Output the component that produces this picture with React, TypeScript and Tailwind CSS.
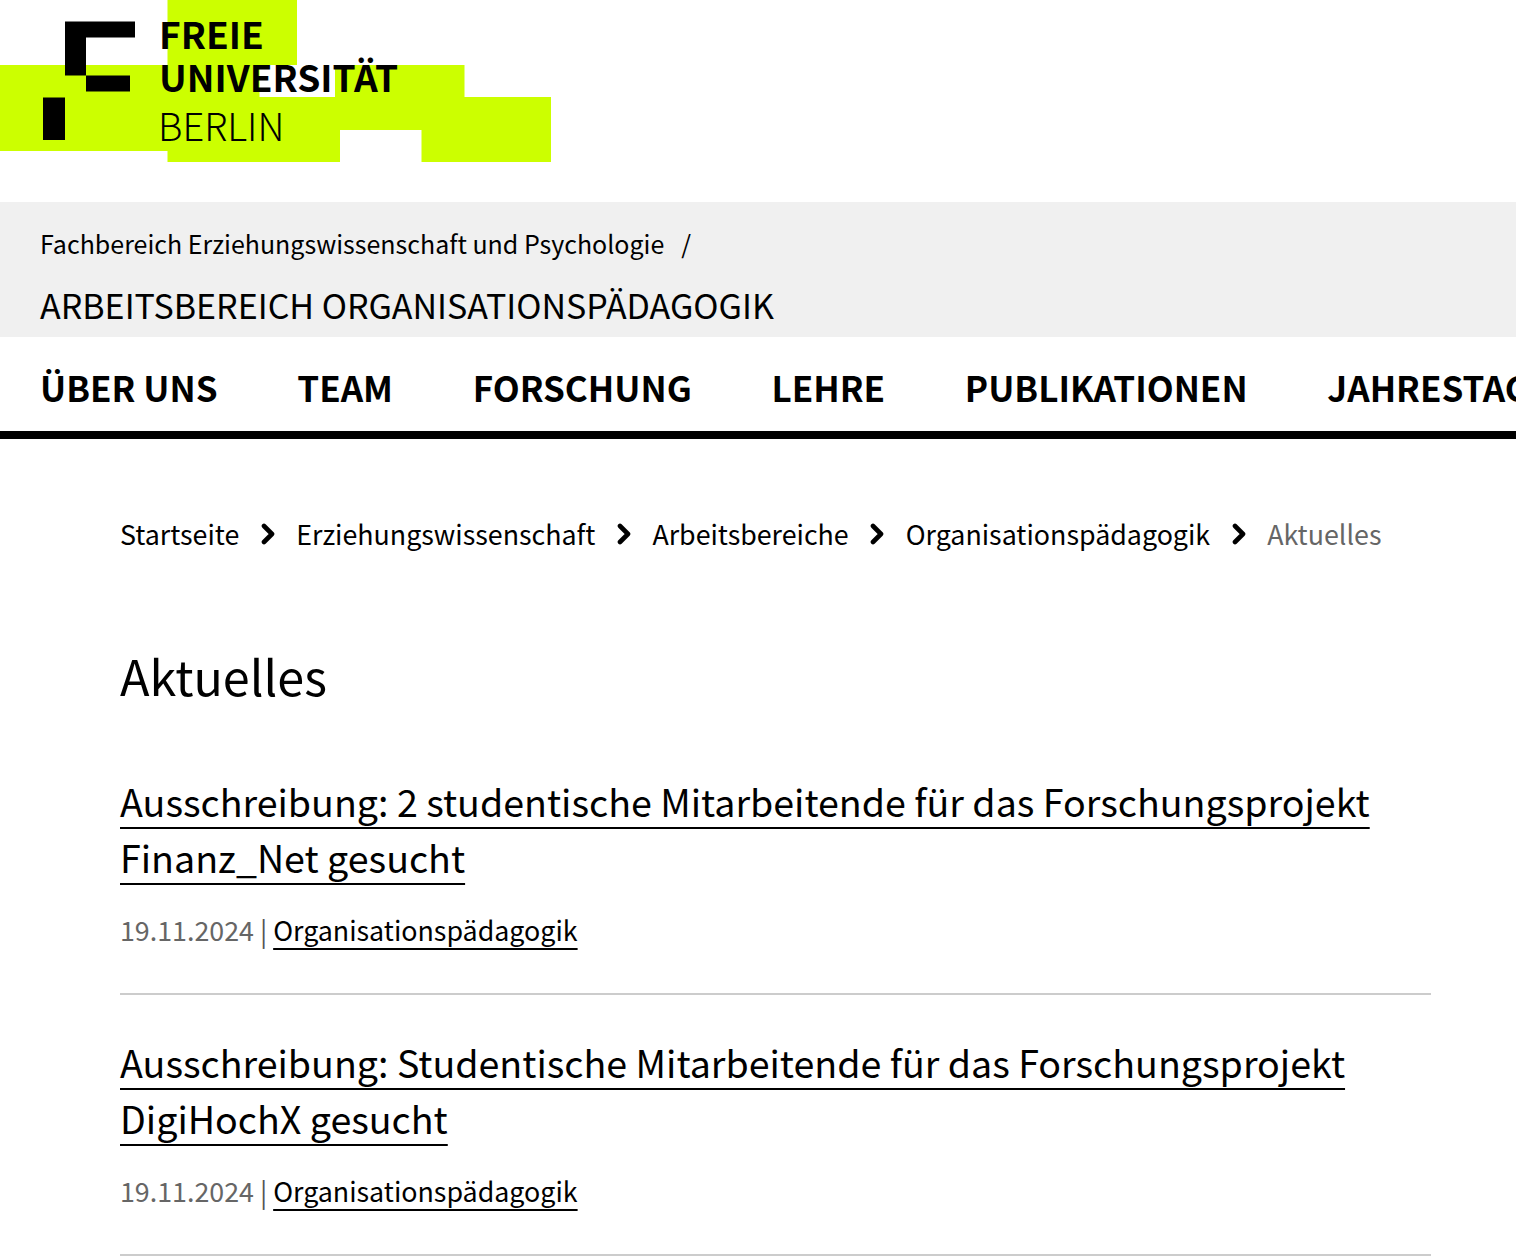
const font = { fontFamily: '"Noto Sans CJK SC", "Noto Sans", sans-serif' };

function Chevron() {
  return (
    <svg width="14" height="22" viewBox="0 0 14 22" className="shrink-0 block">
      <path d="M3 3 L11 11 L3 19" fill="none" stroke="#000" strokeWidth="4.6" strokeLinecap="round" strokeLinejoin="round" />
    </svg>
  );
}

function Logo() {
  return (
    <div className="relative h-[202px]">
      <svg width="552" height="162" viewBox="0 0 552 162" className="absolute left-0 top-0">
        <path
          d="M167.5 0H297V65H259.5V97H335V65H464.5V97H551V162H421.5V130H340V162H167.5V151H0V65H167.5Z"
          fill="#ccff00"
        />
        <path d="M65 21.5H135V37.5H86V75.5H65Z M86 75.5H130V91.5H86Z M43 97.5H65V140H43Z" fill="#000" />
      </svg>
      <div className="absolute left-[159px] top-[12px] text-[37.1px] leading-[43px] font-bold text-black">FREIE</div>
      <div className="absolute left-[159px] top-[55px] text-[37.1px] leading-[43px] font-bold text-black">UNIVERSITÄT</div>
      <div className="absolute left-[158px] top-[103px] text-[38px] leading-[43px] font-light text-black">BERLIN</div>
    </div>
  );
}

const h2Link = "underline decoration-2 underline-offset-[10px] [text-decoration-skip-ink:none]";

function Item({ title, sub }: { title: string; sub: string }) {
  return (
    <article className="pt-[15px] pb-[45px] border-b-2 border-[#cccccc] mb-[24px] last:mb-0">
      <h2 className="text-[37.6px] leading-[56px] font-normal text-black">
        <a className={h2Link}>{title}</a>
        <br />
        <a className={h2Link}>{sub}</a>
      </h2>
      <p className="mt-[27px] text-[26.8px] leading-[36px] text-[#666666]">
        19.11.2024 <span className="text-[#555555]">|</span>{" "}
        <a className="text-black underline decoration-2 underline-offset-[7px] [text-decoration-skip-ink:none]">Organisationspädagogik</a>
      </p>
    </article>
  );
}

export default function App() {
  const nav = ["ÜBER UNS", "TEAM", "FORSCHUNG", "LEHRE", "PUBLIKATIONEN", "JAHRESTAGUNG"];
  const crumbs = ["Startseite", "Erziehungswissenschaft", "Arbeitsbereiche", "Organisationspädagogik"];
  return (
    <div style={font} className="w-[1516px] h-[1256px] overflow-hidden bg-white text-black">
      <Logo />
      <div className="h-[135px] bg-[#f0f0f0] pl-[40px] pt-[22px]">
        <div className="flex text-[25px] leading-[38px]">
          <span>Fachbereich Erziehungswissenschaft und Psychologie</span>
          <span className="ml-[17px]">/</span>
        </div>
        <div className="mt-[19px] text-[34px] leading-[48px]">ARBEITSBEREICH ORGANISATIONSPÄDAGOGIK</div>
      </div>
      <nav className="h-[102px] border-b-8 border-black flex gap-[79.7px] pl-[40px] pt-[22px] overflow-hidden whitespace-nowrap">
        {nav.map((n) => (
          <span key={n} className="text-[35px] leading-[56px] font-bold">{n}</span>
        ))}
      </nav>
      <main className="pl-[120px] pr-[85px]">
        <div className="flex items-center h-[40px] mt-[75px] text-[26.8px] leading-[40px]">
          {crumbs.map((c) => (
            <div key={c} className="flex items-center">
              <span>{c}</span>
              <span className="mx-[21.5px]"><Chevron /></span>
            </div>
          ))}
          <span className="text-[#666666]">Aktuelles</span>
        </div>
        <h1 className="mt-[86px] text-[48.5px] leading-[70px] font-normal">Aktuelles</h1>
        <div className="mt-[48px]">
          <Item title="Ausschreibung: 2 studentische Mitarbeitende für das Forschungsprojekt" sub="Finanz_Net gesucht" />
          <Item title="Ausschreibung: Studentische Mitarbeitende für das Forschungsprojekt" sub="DigiHochX gesucht" />
        </div>
      </main>
    </div>
  );
}
